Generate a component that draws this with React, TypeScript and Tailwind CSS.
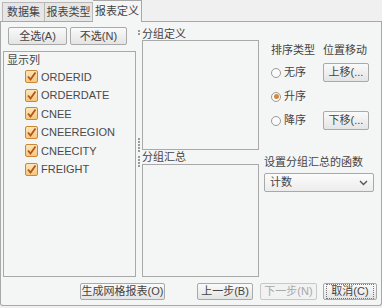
import React from 'react'

const cols = ['ORDERID', 'ORDERDATE', 'CNEE', 'CNEEREGION', 'CNEECITY', 'FREIGHT']

const font = "font-['Liberation_Sans','Noto_Sans_CJK_SC',sans-serif]"

function Btn({ children, className = '', disabled = false, focus = false }: { children: React.ReactNode; className?: string; disabled?: boolean; focus?: boolean }) {
  return (
    <div
      className={`flex items-center justify-center rounded-[2px] border text-[11px] leading-none ${
        disabled ? 'border-[#c8c8c8] text-[#a8a8a8] bg-[#f2f2f2]' : 'border-[#a9a9a9] text-[#444] bg-gradient-to-b from-[#fafafa] to-[#e4e4e4]'
      } ${className}`}
    >
      {focus ? (
        <span className="m-[2px] flex h-full w-full items-center justify-center border border-dotted border-[#777]">{children}</span>
      ) : (
        children
      )}
    </div>
  )
}

function Check() {
  return (
    <span className="flex h-[13px] w-[13px] items-center justify-center rounded-[2px] border border-[#c9873a] bg-gradient-to-b from-[#fde6b8] to-[#f5c77d]">
      <svg width="11" height="11" viewBox="0 0 11 11">
        <path d="M2 5.5 L4.5 8.5 L9.5 1.5" fill="none" stroke="#b4541a" strokeWidth="1.8" />
      </svg>
    </span>
  )
}

function Radio({ on }: { on?: boolean }) {
  return (
    <span className="flex h-[10px] w-[10px] items-center justify-center rounded-full border border-[#9a9a9a] bg-[#fafafa]">
      {on && <span className="h-[5px] w-[5px] rounded-full bg-[#d08a3c]" />}
    </span>
  )
}

function Grip({ n }: { n: number }) {
  return (
    <div className="flex flex-col gap-[1px]">
      {Array.from({ length: n }).map((_, i) => (
        <span key={i} className="h-[2px] w-[2px] bg-[#9a9a9a]" />
      ))}
    </div>
  )
}

export default function App() {
  return (
    <div className={`w-[382px] h-[308px] bg-[#f0f0f0] text-[#444] ${font}`}>
      <div className="flex h-[22px] items-end pl-[2px] border-b border-[#a8a8a8]">
        <div className="flex h-[19px] w-[43px] items-center justify-center border border-b-0 border-[#b8b8b8] bg-[#e6e6e6] text-[11px]">数据集</div>
        <div className="flex h-[19px] w-[48px] items-center justify-center border border-b-0 border-l-0 border-[#b8b8b8] bg-[#e6e6e6] text-[11px]">报表类型</div>
        <div className="mb-[-1px] flex h-[22px] w-[49px] items-center justify-center border border-b-0 border-l-0 border-[#a8a8a8] bg-[#f4f5f5] text-[11px]">报表定义</div>
      </div>
      <div className="flex h-[284px] flex-col rounded-b-[3px] border border-t-0 border-[#a8a8a8] bg-[#f4f5f5]">
        <div className="flex h-[256px]">
          <div className="ml-[2px] flex w-[133px] flex-col pt-[5px]">
            <div className="flex gap-[3px] pl-[5px]">
              <Btn className="h-[18px] w-[59px]">全选(A)</Btn>
              <Btn className="h-[18px] w-[57px]">不选(N)</Btn>
            </div>
            <div className="mt-[6px] h-[226px] border border-[#a9a9a9] bg-[#f4f5f5]">
              <div className="pl-[3px] pt-[1px] text-[11px] leading-[14px]">显示列</div>
              <div className="mt-[3px] flex flex-col gap-[5px] pl-[21px]">
                {cols.map((c) => (
                  <div key={c} className="flex h-[13.5px] items-center gap-[3px] text-[11px] text-[#4a4a4a]">
                    <Check />
                    <span>{c}</span>
                  </div>
                ))}
              </div>
            </div>
          </div>
          <div className="flex w-[5px] flex-col items-center">
            <div className="mt-[8px]"><Grip n={2} /></div>
            <div className="mt-[103px]"><Grip n={5} /></div>
            <div className="mt-[4px]"><Grip n={4} /></div>
          </div>
          <div className="flex w-[118px] flex-col pt-[6px]">
            <div className="pl-[1px] text-[11px] leading-[12px]">分组定义</div>
            <div className="ml-[1px] h-[110px] border border-[#a9a9a9]" />
            <div className="mt-[1px] pl-[1px] text-[11px] leading-[13px]">分组汇总</div>
            <div className="ml-[1px] h-[113px] border border-[#a9a9a9]" />
          </div>
          <div className="flex flex-1 flex-col pl-[5px] pr-[7px] pt-[21px]">
            <div className="flex pl-[7px] text-[11px] leading-[14px]">
              <span className="w-[52px]">排序类型</span>
              <span>位置移动</span>
            </div>
            <div className="mt-[6px] flex items-center pl-[7px]">
              <div className="flex w-[52px] items-center gap-[3px] text-[11px]"><Radio />无序</div>
              <Btn className="h-[19px] w-[46px]">上移(...</Btn>
            </div>
            <div className="mt-[5px] flex h-[19px] items-center pl-[7px]">
              <div className="flex w-[52px] items-center gap-[3px] text-[11px]"><Radio on />升序</div>
            </div>
            <div className="mt-[5px] flex items-center pl-[7px]">
              <div className="flex w-[52px] items-center gap-[3px] text-[11px]"><Radio />降序</div>
              <Btn className="h-[19px] w-[46px]">下移(...</Btn>
            </div>
            <div className="mt-[25px] text-[11px] leading-[14px]">设置分组汇总的函数</div>
            <div className="mt-[4px] flex h-[19px] items-center justify-between rounded-[2px] border border-[#a9a9a9] bg-gradient-to-b from-[#fcfcfc] to-[#ececec] px-[5px] text-[11px]">
              <span>计数</span>
              <svg width="9" height="6" viewBox="0 0 9 6">
                <path d="M1 1 L4.5 4.5 L8 1" fill="none" stroke="#555" strokeWidth="1.4" />
              </svg>
            </div>
          </div>
        </div>
        <div className="flex items-center pt-[5px]">
          <Btn className="ml-[79px] h-[17px] w-[85px]">生成网格报表(O)</Btn>
          <Btn className="ml-[32px] h-[17px] w-[56px]">上一步(B)</Btn>
          <Btn className="ml-[7px] h-[17px] w-[57px]" disabled>下一步(N)</Btn>
          <Btn className="ml-[6px] h-[17px] w-[54px]" focus>取消(C)</Btn>
        </div>
      </div>
    </div>
  )
}
